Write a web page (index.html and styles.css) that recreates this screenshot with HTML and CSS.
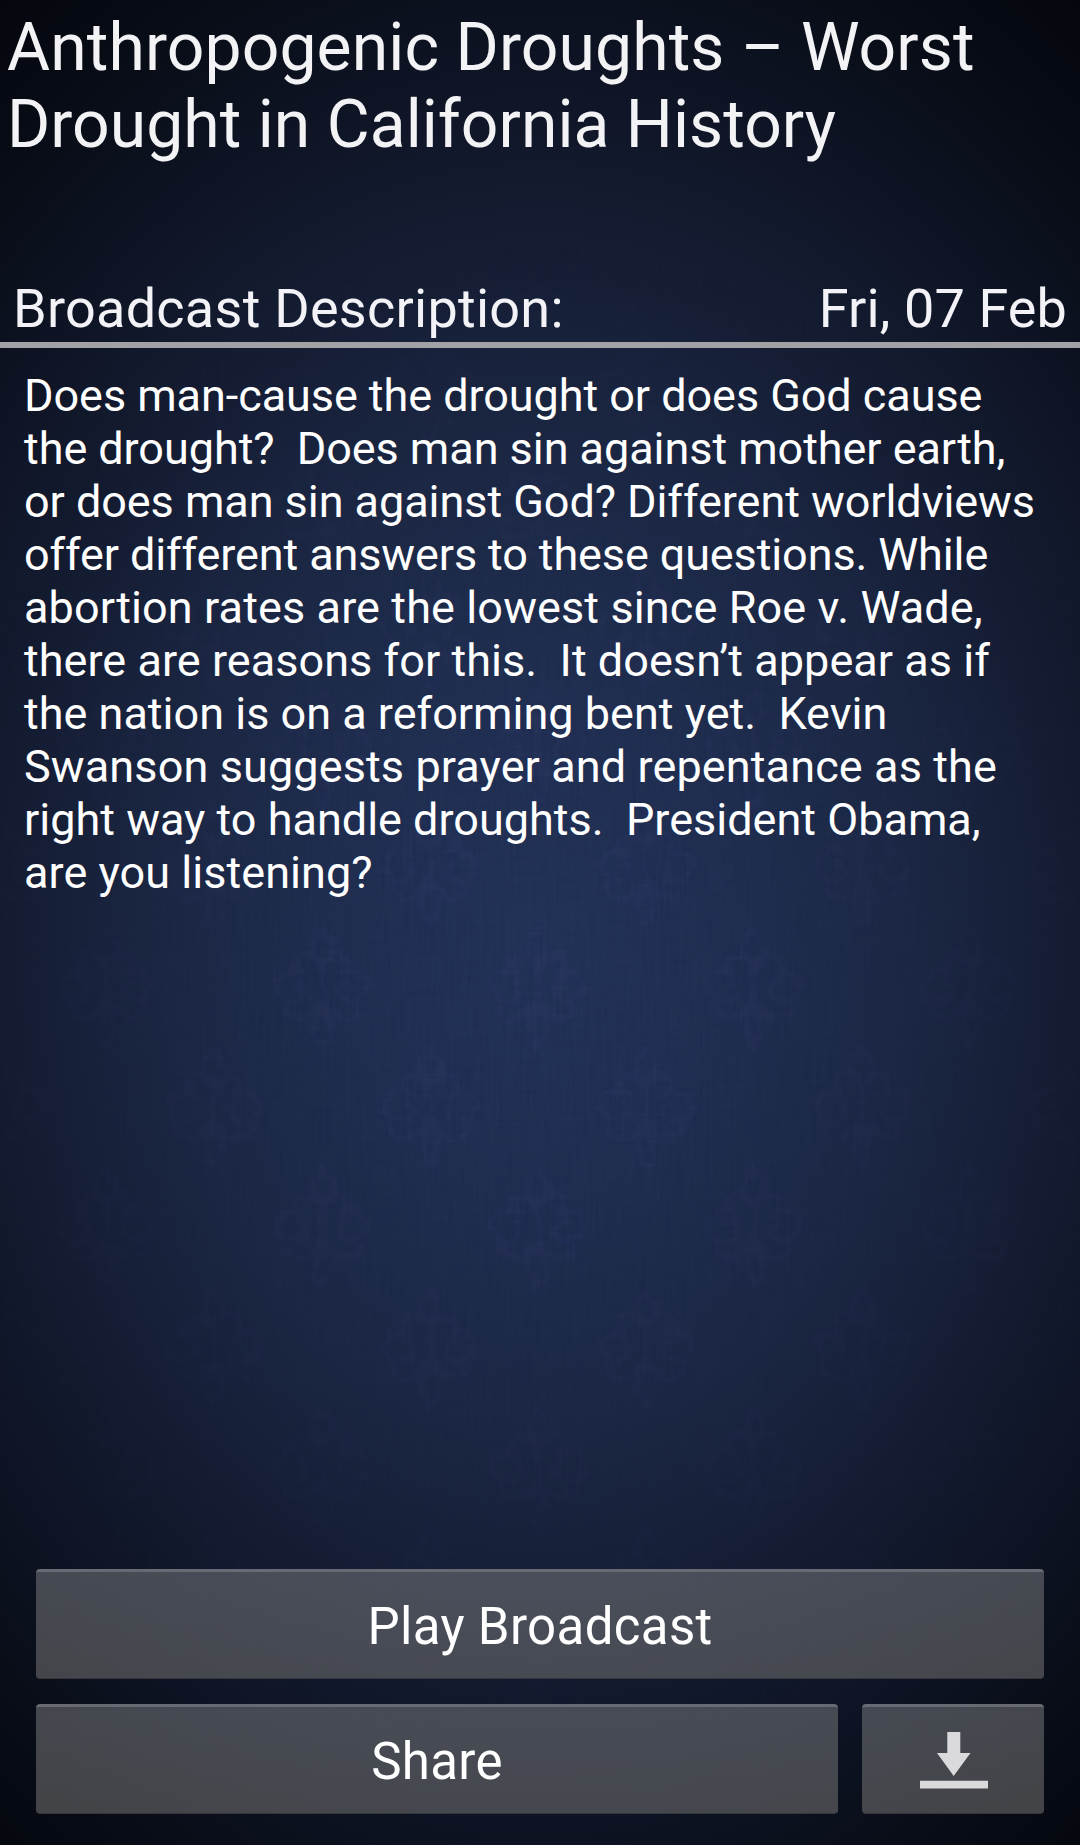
FILE: index.html
```html
<!DOCTYPE html>
<html lang="en">
<head>
<meta charset="utf-8">
<title>Broadcast</title>
<link rel="stylesheet" href="styles.css">
</head>
<body>
<svg class="backdrop" width="1080" height="1845" aria-hidden="true">
  <defs>
    <g id="motif" fill="none" stroke="#7a6aa8" stroke-width="7">
      <path d="M0-58 C-12-45-14-34 0-24 C14-34 12-45 0-58Z M0 60 C-10 45-10 34 0 20 C10 34 10 45 0 60Z"/>
      <path d="M0-20 C-20-44-34-26-22-14 C-50-22-54 12-30 14 C-12 14-14-8-28-4 M0-20 C20-44 34-26 22-14 C50-22 54 12 30 14 C12 14 14-8 28-4"/>
      <path d="M-40 18 C-34 34-20 36-6 20 M40 18 C34 34 20 36 6 20 M-20 34 L0 14 L20 34 M0-24V20"/>
    </g>
    <pattern id="damask" width="216" height="240" patternUnits="userSpaceOnUse" patternTransform="translate(-2 867)">
      <use href="#motif" x="108" y="120"/>
      <use href="#motif" x="0" y="0"/><use href="#motif" x="216" y="0"/>
      <use href="#motif" x="0" y="240"/><use href="#motif" x="216" y="240"/>
    </pattern>
    <filter id="worn" x="0" y="0" width="100%" height="100%">
      <feTurbulence type="fractalNoise" baseFrequency="0.07" numOctaves="2" seed="9"/>
      <feDisplacementMap in="SourceGraphic" scale="16" xChannelSelector="R" yChannelSelector="G"/>
      <feGaussianBlur stdDeviation="2"/>
    </filter>
    <filter id="warp" x="0" y="0" width="100%" height="100%">
      <feTurbulence type="fractalNoise" baseFrequency="0.3 0.02" numOctaves="2" seed="4"/>
      <feColorMatrix values="0 0 0 0 0  0 0 0 0 0  0 0 0 0 0.05  0.6 0 0 0 -0.2"/>
    </filter>
    <filter id="weft" x="0" y="0" width="100%" height="100%">
      <feTurbulence type="fractalNoise" baseFrequency="0.02 0.3" numOctaves="2" seed="7"/>
      <feColorMatrix values="0 0 0 0 0  0 0 0 0 0  0 0 0 0 0.05  0.6 0 0 0 -0.2"/>
    </filter>
    <radialGradient id="fade" gradientUnits="userSpaceOnUse" cx="540" cy="1000" r="640" gradientTransform="translate(0 -200) scale(1 1.2)">
      <stop offset="0.3" stop-color="#fff"/><stop offset="1" stop-color="#000"/>
    </radialGradient>
    <mask id="centre"><rect width="1080" height="1845" fill="url(#fade)"/></mask>
  </defs>
  <g mask="url(#centre)">
    <g opacity="0.065"><rect width="1080" height="1845" fill="url(#damask)" filter="url(#worn)"/></g>
    <g opacity="0.25"><rect width="1080" height="1845" filter="url(#warp)"/></g>
    <g opacity="0.15"><rect width="1080" height="1845" filter="url(#weft)"/></g>
  </g>
</svg>
<main class="screen">
  <h1 class="title"><span class="wide-2">Anthropogenic Droughts – Worst</span>
<span class="wide-1">Drought in California History</span></h1>
  <div class="subhead"><span class="wide-3">Broadcast Description:</span><span class="wide-2">Fri, 07 Feb</span></div>
  <p class="description"><span class="tight-1">Does man-cause the drought or does God cause
the drought?  Does man sin against mother earth,
or does man sin against God? Different worldviews</span>
<span class="tight-2">offer different answers to these questions. While</span>
<span class="wide-2">abortion rates are the lowest since Roe v. Wade,</span>
<span class="wide-1">there are reasons for this.  It doesn’t appear as if</span>
the nation is on a reforming bent yet.  Kevin
<span class="wide-2">Swanson suggests prayer and repentance as the</span>
right way to handle droughts.  President Obama,
<span class="wide-1">are you listening?</span></p>
  <div class="actions">
    <button class="button">Play Broadcast</button>
    <div class="action-row">
      <button class="button share">Share</button>
      <button class="button download" aria-label="Download">
        <svg width="68" height="58" viewBox="0 0 68 58"><path fill="#dadadc" d="M27.300 0H40.300V21H50.500L33.700 44L17 21H27.300ZM0 48.700H68V56.500H0Z"/></svg>
      </button>
    </div>
  </div>
</main>
</body>
</html>
```
FILE: styles.css
```css
* { box-sizing: border-box; }

body {
  margin: 0;
  height: 1845px;
  overflow: hidden;
  font-family: Roboto, sans-serif;
  color: #fff;
  background: radial-gradient(ellipse 860px 1130px at 540px 940px,
    #243458 0%, #213052 22%, #1c2844 43%, #151d33 62%, #0d1322 79%, #070b14 94%, #04050a 110%);
}

.backdrop {
  position: absolute;
  inset: 0;
  z-index: -1;
}

.screen {
  height: 1845px;
  display: flex;
  flex-direction: column;
}

.title {
  margin: 0;
  padding: 9px 0 0 7px;
  height: 275px;
  font-size: 66px;
  font-weight: 400;
  line-height: 77px;
  white-space: pre;
  color: #f3f3f5;
}

.subhead {
  height: 73px;
  padding: 0 13px;
  display: flex;
  justify-content: space-between;
  border-bottom: 6px solid #a2a2a6;
  font-size: 54px;
  line-height: 67px;
  white-space: nowrap;
  color: #f3f3f7;
}

.description {
  margin: 0;
  padding: 21px 0 0 24px;
  font-size: 45px;
  line-height: 53px;
  white-space: pre;
}

.tight-1 { letter-spacing: -0.06px; }
.tight-2 { letter-spacing: -0.12px; }
.wide-1 { letter-spacing: 0.04px; }
.wide-2 { letter-spacing: 0.11px; }
.wide-3 { letter-spacing: 0.26px; }

.actions {
  margin-top: auto;
  padding: 0 36px 31px;
  display: flex;
  flex-direction: column;
  gap: 25px;
}

.action-row {
  display: flex;
  gap: 24px;
}

.button {
  height: 110px;
  padding: 2px 0 0;
  display: flex;
  align-items: center;
  justify-content: center;
  border: 0;
  border-top: 3px solid #686a73;
  border-bottom: 1px solid #35363b;
  border-radius: 4px;
  background: linear-gradient(rgba(108, 110, 114, 0.6), rgba(106, 106, 106, 0.6));
  font: 400 51px Roboto, sans-serif;
  letter-spacing: 0.35px;
  color: #fff;
}

.share { flex: 1; }

.download {
  width: 182px;
  padding-left: 2px;
}
```
